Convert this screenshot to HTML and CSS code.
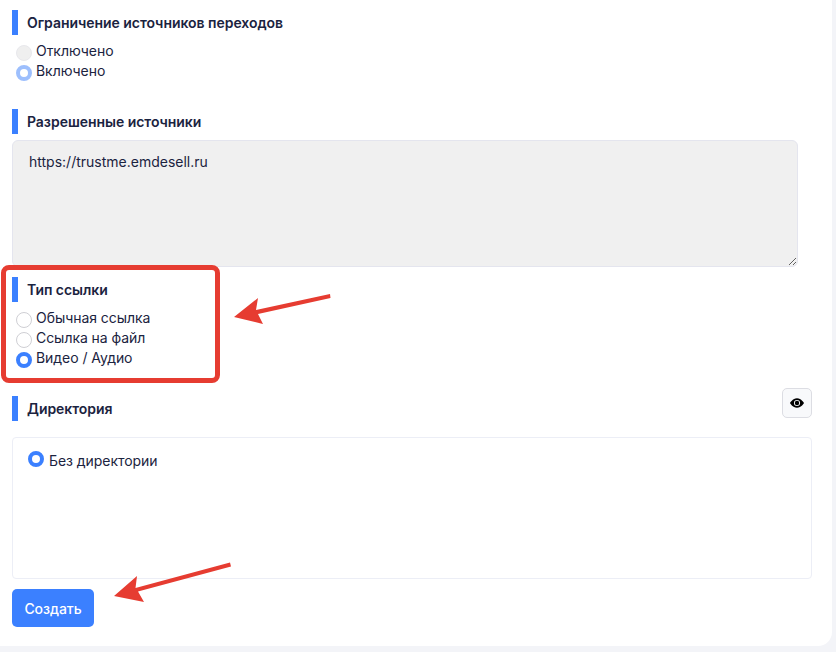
FILE: index.html
```html
<!DOCTYPE html>
<html lang="ru">
<head>
<meta charset="utf-8">
<title>Создать ссылку</title>
<link rel="stylesheet" href="styles.css">
</head>
<body>
<main class="card">
  <section class="group group-limit">
    <h3 class="heading">Ограничение источников переходов</h3>
    <div class="radios">
      <label class="radio-row"><input class="radio" type="radio" name="limit" disabled>Отключено</label>
      <label class="radio-row"><input class="radio" type="radio" name="limit" checked disabled>Включено</label>
    </div>
  </section>
  <section class="group group-sources">
    <h3 class="heading">Разрешенные источники</h3>
    <textarea class="sources" readonly>https://trustme.emdesell.ru</textarea>
  </section>
  <section class="group group-type">
    <h3 class="heading">Тип ссылки</h3>
    <div class="radios">
      <label class="radio-row"><input class="radio" type="radio" name="type">Обычная ссылка</label>
      <label class="radio-row"><input class="radio" type="radio" name="type">Ссылка на файл</label>
      <label class="radio-row"><input class="radio" type="radio" name="type" checked>Видео / Аудио</label>
    </div>
  </section>
  <section class="group group-dir">
    <div class="dir-head">
      <h3 class="heading">Директория</h3>
      <button class="eye-btn" type="button" aria-label="Показать">
        <svg width="14" height="14" viewBox="0 0 16 16" fill="#000"><path d="M10.5 8a2.5 2.5 0 1 1-5 0 2.5 2.5 0 0 1 5 0z"/><path d="M0 8s3-5.5 8-5.5S16 8 16 8s-3 5.5-8 5.5S0 8 0 8zm8 3.5a3.5 3.5 0 1 0 0-7 3.5 3.5 0 0 0 0 7z"/></svg>
      </button>
    </div>
    <div class="dir-box">
      <label class="dir-row"><input class="radio" type="radio" name="dir" checked>Без директории</label>
    </div>
  </section>
  <button class="submit" type="button">Создать</button>

  <div class="mark-box"></div>
  <svg class="arrows" width="836" height="652" viewBox="0 0 836 652" fill="#e63c31">
    <path d="M234 317 L258 298 L256 310 L330 294 L330.500 298 L258 314 L263 324 Z"/>
    <path d="M114 596 L137 576 L135.500 588 L230 562.500 L231 566.500 L138 591.500 L144 602 Z"/>
  </svg>
</main>
</body>
</html>
```
FILE: styles.css
```css
* { box-sizing: border-box; }
html, body { margin: 0; height: 652px; overflow: hidden; }
body {
  background: #f3f4f8;
  font-family: Inter, "Liberation Sans", sans-serif;
  color: #1b2340;
  font-size: 14px;
}
.card {
  position: relative;
  width: 832px;
  height: 646px;
  background: #fff;
  border-radius: 0 0 14px 0;
  padding: 10px 20px 0 12px;
}
.heading {
  margin: 0;
  height: 25px;
  line-height: 25px;
  border-left: 6px solid #3b80ff;
  padding-left: 9px;
  font-size: 14px;
  font-weight: 600;
  letter-spacing: -0.04px;
  color: #1b2340;
}
.radios { display: flex; flex-direction: column; margin-top: 6px; }
.radio-row {
  display: flex;
  align-items: flex-start;
  height: 20px;
  line-height: 20px;
  padding-left: 4px;
  letter-spacing: -0.05px;
  color: #1b2340;
}
.radio {
  appearance: none;
  -webkit-appearance: none;
  flex: none;
  width: 16px;
  height: 16px;
  margin: 4px 4px 0 0;
  border: 1px solid #cfcfd4;
  border-radius: 50%;
  background: #fff;
}
.radio:checked { border: 4.5px solid #3b80ff; background: #fff; }
.radio:disabled { background: #efefef; border-color: #e8e8ec; }
.radio:checked:disabled { border-color: #9dbffd; background: #fff; }
.group-sources { margin-top: 28px; }
.sources {
  display: block;
  width: 786px;
  height: 127px;
  margin-top: 6px;
  padding: 11px 16px;
  border: 1px solid #e4e5ee;
  border-radius: 6px;
  background: #f0f0f0;
  font: 14px/20px Inter, "Liberation Sans", sans-serif;
  color: #1b2340;
  resize: vertical;
  outline: none;
}
.group-type { margin-top: 10px; }
.group-dir { margin-top: 28px; }
.dir-head { display: flex; justify-content: space-between; align-items: flex-end; height: 25px; }
.eye-btn {
  display: flex;
  align-items: center;
  justify-content: center;
  width: 30px;
  height: 30px;
  margin-top: -8px;
  align-self: flex-start;
  padding: 0;
  border: 1px solid #dcdde3;
  border-radius: 5px;
  background: #f8f9fb;
}
.dir-box {
  height: 142px;
  margin-top: 16px;
  padding: 13px 15px;
  border: 1px solid #eceef6;
  border-radius: 4px;
}
.dir-row { display: flex; align-items: flex-start; line-height: 20px; letter-spacing: -0.05px; color: #1b2340; }
.dir-row .radio { margin: 0 5px 0 0; }
.submit {
  display: block;
  width: 82px;
  height: 38px;
  margin-top: 10px;
  padding: 0;
  border: 0;
  border-radius: 5px;
  background: #3b80ff;
  color: #fff;
  font: 500 14px Inter, "Liberation Sans", sans-serif;
  letter-spacing: -0.05px;
}
.mark-box {
  position: absolute;
  left: 1px;
  top: 265px;
  width: 219px;
  height: 118px;
  border: 5px solid #e63c31;
  border-radius: 8px;
}
.arrows { position: absolute; left: 0; top: 0; pointer-events: none; }
```
